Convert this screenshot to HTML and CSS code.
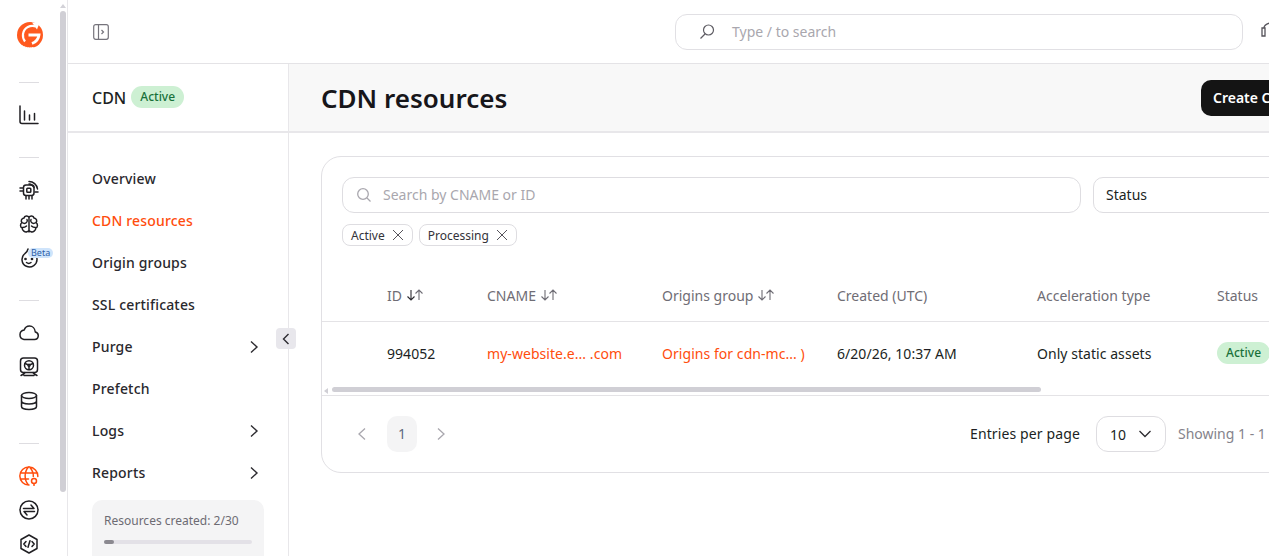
FILE: index.html
```html
<!DOCTYPE html>
<html lang="en">
<head>
    <meta charset="UTF-8">
    <meta name="viewport" content="width=device-width, initial-scale=1.0">
    <title>CDN resources</title>
    <link rel="stylesheet" href="styles.css">
</head>
<body>
    <div class="app">
        <aside class="rail">
            <div class="rail-scroll"><span class="rail-arrow"></span><span class="rail-thumb"></span></div>
            <div class="logo">
                <svg width="28" height="28" viewBox="0 0 28 28">
                    <circle cx="14" cy="14" r="13" fill="#ff5a1f"/>
                    <path d="M20 5.500C14.500 3.500 8 6.500 7 13c-.4 3 .5 5.500 2 7.500" fill="none" stroke="#fff" stroke-width="2.200"/>
                    <path d="M16 1.500 23.500 2 21 8.500Z" fill="#fff"/>
                    <path d="M12.500 14H23c-.5 4-3 7-7 8.500" fill="none" stroke="#fff" stroke-width="2.800"/>
                    <path d="M2.500 21.500c4 5 10 6 15 5" fill="none" stroke="#fff" stroke-width="1"/>
                </svg>
            </div>
            <div class="rail-line"></div>
            <div class="rail-icon">
                <svg class="ico" viewBox="0 0 20 20"><path d="M1 1v15.500a2 2 0 0 0 2 2h16M5.500 6v9M10.500 10v5M15.500 8.500V15"/></svg>
            </div>
            <div class="rail-line wide"></div>
            <div class="rail-icon">
                <svg class="ico" viewBox="0 0 20 20"><rect x="4.500" y="5" width="10.500" height="10.500" rx="2.500"/><rect x="7.800" y="8.300" width="4" height="4" rx=".8"/><path d="M1 8h3M1 11h3M16 12h3M7 16v3M10 16v3M13 16v3M10 1.500a8.500 8.500 0 0 1 8.500 7.500M10 4a6 6 0 0 1 5 3.500"/></svg>
            </div>
            <div class="rail-icon">
                <svg class="ico" viewBox="0 0 20 20"><path d="M10 3v15M10 3.500C9 1.500 5.500 1.500 5 4 2.500 4.200 1.500 7 3 8.500 1 10 1 13 3.200 14c0 2.800 2.800 4.500 4.800 3.800.8-.1 1.500-.8 2-1.300.5.500 1.200 1.200 2 1.300 2 .7 4.800-1 4.800-3.800C19 13 19 10 17 8.500 18.500 7 17.500 4.200 15 4c-.5-2.500-4-2.500-5-.500ZM3 8.500c1.500 1 3.500 1 4.500 0 1-.8 1-2 .5-3M17 8.500c-1.500 1-3.500 1-4.500 0-1-.8-1-2-.5-3M3.500 13.500c1.500 0 3-.5 4-1.500M16.500 13.500c-1.500 0-3-.5-4-1.500"/></svg>
            </div>
            <div class="rail-icon">
                <svg class="ico" viewBox="0 0 20 20"><path d="M6 5.500A7.500 7.500 0 1 0 18 11c0-1.500-.3-2.500-1-3.500M6 5.500C8 4.500 8.500 3 9 1"/><circle cx="6.500" cy="11" r=".6"/><circle cx="13" cy="11" r=".6"/><path d="M7.500 14.500c1.200 1 3.300 1 4.500 0"/></svg>
                <span class="beta">Beta</span>
            </div>
            <div class="rail-line wide"></div>
            <div class="rail-icon">
                <svg class="ico" viewBox="0 0 20 20"><path d="M5 16.500h10.500a3.800 3.800 0 0 0 .8-7.500C16 5.500 13.500 3 10.500 3 8 3 6 4.500 5.200 7A4.800 4.800 0 0 0 5 16.500Z"/></svg>
            </div>
            <div class="rail-icon">
                <svg class="ico" viewBox="0 0 20 20"><rect x="1.500" y="1" width="17" height="14.500" rx="3"/><circle cx="10" cy="8.200" r="4.500"/><circle cx="10" cy="8.200" r="1"/><path d="M10 9.200V12.500M9.100 7.700 6 6.500M10.900 7.700 14 6.500M2 18.500c2-1 3-1.500 4-3M18 18.500c-2-1-3-1.500-4-3M5 18.500h10"/></svg>
            </div>
            <div class="rail-icon">
                <svg class="ico" viewBox="0 0 20 20"><ellipse cx="10" cy="4.500" rx="7.500" ry="3"/><path d="M2.500 4.500v11c0 1.700 3.400 3 7.500 3s7.500-1.300 7.500-3v-11M2.500 10c0 1.700 3.400 3 7.500 3s7.500-1.300 7.500-3"/></svg>
            </div>
            <div class="rail-line wide"></div>
            <div class="rail-icon active">
                <svg class="ico" viewBox="0 0 20 20"><path d="M18.800 10.500A9 9 0 1 0 10 19M1.500 7h17M1.500 13h8M9.500 1C5 6 5 14 9.500 19M10.500 1c3 3.200 4 6.500 3.800 9.500"/><circle cx="15" cy="15" r="2.500"/><path d="M15 17.500v2"/></svg>
            </div>
            <div class="rail-icon">
                <svg class="ico" viewBox="0 0 20 20"><circle cx="10" cy="10" r="9"/><path d="M4.500 8.500h10.500l-3-3.500M15.500 11.500H5l3 3.500"/></svg>
            </div>
            <div class="rail-icon">
                <svg class="ico" viewBox="0 0 20 20"><path d="M10 1 18 5.500v9L10 19l-8-4.500v-9ZM7 7.500 4.800 10 7 12.500M13 7.500 15.200 10 13 12.500M11 6.800 9 13.200"/></svg>
            </div>
        </aside>

        <div class="main">
            <header class="topbar">
                <svg class="panel-toggle" width="16" height="16" viewBox="0 0 16 16"><rect x=".7" y=".7" width="14.600" height="14.600" rx="2"/><path d="M5.500 1v14M8.500 6l2 2-2 2"/></svg>
                <div class="top-search">
                    <svg width="18" height="18" viewBox="0 0 18 18"><circle cx="10.500" cy="7" r="5"/><path d="M7 11 2.500 15.500"/></svg>
                    <span>Type / to search</span>
                </div>
                <svg class="top-help" width="20" height="20" viewBox="0 0 20 20"><path d="M4 6c0-2 2-4 6-5M2 6h3v8H2ZM10 17h1"/></svg>
            </header>

            <div class="subhead">
                <div class="subhead-left">
                    <span class="product">CDN</span>
                    <span class="badge">Active</span>
                </div>
                <div class="subhead-right">
                    <h1>CDN resources</h1>
                    <button class="btn-create">Create CDN resource</button>
                </div>
            </div>

            <div class="body-row">
                <nav class="sidebar">
                    <a class="nav-item">Overview</a>
                    <a class="nav-item selected">CDN resources</a>
                    <a class="nav-item">Origin groups</a>
                    <a class="nav-item">SSL certificates</a>
                    <a class="nav-item">Purge <svg class="chev" viewBox="0 0 10 14"><path d="M2 1.500 8 7l-6 5.500"/></svg></a>
                    <a class="nav-item">Prefetch</a>
                    <a class="nav-item">Logs <svg class="chev" viewBox="0 0 10 14"><path d="M2 1.500 8 7l-6 5.500"/></svg></a>
                    <a class="nav-item">Reports <svg class="chev" viewBox="0 0 10 14"><path d="M2 1.500 8 7l-6 5.500"/></svg></a>
                    <div class="quota">
                        <div class="quota-label">Resources created: 2/30</div>
                        <div class="quota-track"><div class="quota-fill" style="width: 6.700%"></div></div>
                    </div>
                    <button class="collapse"><svg width="8" height="12" viewBox="0 0 8 12"><path d="M6.500 1 1.500 6l5 5"/></svg></button>
                </nav>

                <section class="content">
                    <div class="card">
                        <div class="filters">
                            <div class="search-box">
                                <svg width="16" height="16" viewBox="0 0 16 16"><circle cx="7" cy="7" r="5.300"/><path d="m11 11 3.500 3.500"/></svg>
                                <span>Search by CNAME or ID</span>
                            </div>
                            <div class="status-select">Status</div>
                        </div>
                        <div class="chips">
                            <span class="chip">Active <svg viewBox="0 0 12 12"><path d="m1 1 10 10M11 1 1 11"/></svg></span>
                            <span class="chip">Processing <svg viewBox="0 0 12 12"><path d="m1 1 10 10M11 1 1 11"/></svg></span>
                        </div>

                        <div class="table-row table-head">
                            <div>ID <svg class="sort" viewBox="0 0 18 12"><path class="down" d="M5 1v10M1.500 7.500 5 11l3.500-3.500"/><path d="M13 11V1M9.500 4.500 13 1l3.500 3.500"/></svg></div>
                            <div>CNAME <svg class="sort" viewBox="0 0 18 12"><path d="M5 1v10M1.500 7.500 5 11l3.500-3.500M13 11V1M9.500 4.500 13 1l3.500 3.500"/></svg></div>
                            <div>Origins group <svg class="sort" viewBox="0 0 18 12"><path d="M5 1v10M1.500 7.500 5 11l3.500-3.500M13 11V1M9.500 4.500 13 1l3.500 3.500"/></svg></div>
                            <div>Created (UTC)</div>
                            <div>Acceleration type</div>
                            <div>Status</div>
                        </div>
                        <div class="table-row table-data">
                            <div>994052</div>
                            <div class="link">my-website.e... .com</div>
                            <div class="link">Origins for cdn-mc... )</div>
                            <div>6/20/26, 10:37 AM</div>
                            <div>Only static assets</div>
                            <div><span class="badge small">Active</span></div>
                        </div>
                        <div class="hscroll"><span class="hscroll-arrow"></span><span class="hscroll-thumb"></span></div>

                        <div class="pager">
                            <svg class="pg-arrow" viewBox="0 0 10 14"><path d="M8 1.500 2 7l6 5.500"/></svg>
                            <span class="pg-num">1</span>
                            <svg class="pg-arrow" viewBox="0 0 10 14"><path d="M2 1.500 8 7l-6 5.500"/></svg>
                            <span class="per-page">Entries per page</span>
                            <div class="per-select">10 <svg width="14" height="8" viewBox="0 0 14 8"><path d="m1.500 1 5.500 5.500L12.500 1"/></svg></div>
                            <span class="showing">Showing 1 - 1 of 1</span>
                        </div>
                    </div>
                </section>
            </div>
        </div>
    </div>
</body>
</html>
```

FILE: styles.css
```css
* {
    margin: 0;
    padding: 0;
    box-sizing: border-box;
}

html, body {
    width: 1269px;
    height: 556px;
    overflow: hidden;
}

body {
    font-family: "Noto Sans", "Open Sans", sans-serif;
    font-size: 14px;
    color: #201f23;
    background: #ffffff;
}

.app {
    display: flex;
    height: 556px;
}

/* left icon rail */
.rail {
    position: relative;
    flex: 0 0 68px;
    height: 556px;
    border-right: 1px solid #e8e7ea;
    display: flex;
    flex-direction: column;
    align-items: flex-start;
    padding-top: 21px;
    overflow: hidden;
}

.rail-scroll {
    position: absolute;
    top: 0;
    left: 60px;
    width: 7px;
    height: 100%;
}

.rail-arrow {
    position: absolute;
    top: 4px;
    left: 0;
    border-left: 3.500px solid transparent;
    border-right: 3.500px solid transparent;
    border-bottom: 4px solid #d3d2d8;
}

.rail-thumb {
    position: absolute;
    top: 11px;
    left: 0;
    width: 6px;
    height: 481px;
    border-radius: 3px;
    background: #d0cfd5;
}

.logo {
    flex: none;
    width: 60px;
    height: 28px;
    display: flex;
    justify-content: center;
    margin-bottom: 33px;
}

.rail-line {
    flex: none;
    width: 20px;
    height: 1px;
    margin: 0 0 15px 19px;
    background: #dedde1;
}

.rail-line.wide {
    margin-top: 25px;
}

.rail-icon {
    flex: none;
    position: relative;
    width: 58px;
    height: 34px;
    display: flex;
    align-items: center;
    justify-content: center;
}

.ico {
    width: 20px;
    height: 20px;
    fill: none;
    stroke: #201f23;
    stroke-width: 1.500;
    stroke-linecap: round;
    stroke-linejoin: round;
}

.rail-icon.active .ico {
    stroke: #ff4d0d;
}

.beta {
    position: absolute;
    top: 7px;
    left: 28px;
    padding: 0 3px;
    font-size: 9px;
    line-height: 10px;
    border-radius: 5px;
    color: #2c5ea8;
    background: #cfe4fb;
}

/* main column */
.main {
    flex: 1;
    min-width: 0;
}

.topbar {
    height: 64px;
    display: flex;
    align-items: center;
    padding: 0 0 0 25px;
    border-bottom: 1px solid #e4e3e6;
}

.panel-toggle {
    flex: 0 0 16px;
    fill: none;
    stroke: #75737b;
    stroke-width: 1.200;
}

.top-search {
    flex: 0 0 568px;
    height: 36px;
    margin-left: 566px;
    display: flex;
    align-items: center;
    gap: 16px;
    padding-left: 22px;
    border: 1px solid #e1e0e4;
    border-radius: 12px;
    color: #a9a7ae;
}

.top-search svg {
    fill: none;
    stroke: #5e5c63;
    stroke-width: 1.200;
}

.top-help {
    flex: 0 0 20px;
    margin-left: 17px;
    fill: none;
    stroke: #55535a;
    stroke-width: 1.300;
}

.subhead {
    display: flex;
    height: 69px;
    border-bottom: 2px solid #e8e7ea;
}

.subhead-left {
    flex: 0 0 221px;
    display: flex;
    align-items: center;
    gap: 5px;
    padding-left: 24px;
    border-right: 1px solid #e8e7ea;
}

.subhead-left .badge {
    margin-bottom: 2px;
}

.product {
    font-size: 16px;
    font-weight: 500;
    margin-top: 1px;
}

.badge {
    display: inline-block;
    height: 22px;
    padding: 0 9px;
    line-height: 21px;
    font-size: 12px;
    font-weight: 500;
    border-radius: 11px;
    color: #19703a;
    background: #cdf0d3;
}

.subhead-right {
    flex: 1;
    min-width: 0;
    display: flex;
    align-items: center;
    justify-content: space-between;
    padding-left: 32px;
    background: #f8f8f8;
    overflow: hidden;
}

h1 {
    font-size: 26px;
    font-weight: 600;
    color: #17161a;
}

.btn-create {
    flex: 0 0 140px;
    height: 36px;
    margin-right: -72px;
    padding-left: 12px;
    text-align: left;
    white-space: nowrap;
    overflow: hidden;
    font-family: inherit;
    font-size: 14px;
    font-weight: 600;
    color: #ffffff;
    background: #141414;
    border: none;
    border-radius: 10px;
}

.body-row {
    display: flex;
    height: 423px;
}

/* sidebar */
.sidebar {
    position: relative;
    flex: 0 0 221px;
    padding: 24px 24px 0;
    border-right: 1px solid #e8e7ea;
}

.nav-item {
    display: flex;
    align-items: center;
    justify-content: space-between;
    height: 42px;
    font-size: 14px;
    font-weight: 500;
    letter-spacing: .17px;
    padding-right: 5px;
    color: #29282d;
}

.nav-item.selected {
    color: #ff4d0d;
}

.chev {
    width: 10px;
    height: 14px;
    fill: none;
    stroke: #2c2b30;
    stroke-width: 1.400;
    margin-top: 1px;
}

.quota {
    height: 80px;
    margin-top: 7px;
    padding: 12px 12px;
    border-radius: 10px;
    background: #f4f4f5;
}

.quota-label {
    font-size: 12px;
    color: #6d6b73;
}

.quota-track {
    height: 4px;
    margin-top: 11px;
    border-radius: 2px;
    background: #e3e1e7;
}

.quota-fill {
    height: 4px;
    border-radius: 2px;
    background: #8b8990;
}

.collapse {
    position: absolute;
    top: 195px;
    left: 208px;
    width: 20px;
    height: 21px;
    display: flex;
    align-items: center;
    justify-content: center;
    border: none;
    border-radius: 4px;
    background: #e8e7ec;
}

.collapse svg {
    fill: none;
    stroke: #2c2b30;
    stroke-width: 1.400;
}

/* content card */
.content {
    flex: 1;
    min-width: 0;
    padding: 23px 0 0 32px;
    overflow: hidden;
}

.card {
    width: 1100px;
    height: 317px;
    padding: 20px 0 0;
    border: 1px solid #e1e0e4;
    border-radius: 20px;
}

.filters {
    display: flex;
    gap: 12px;
    padding: 0 20px;
}

.search-box {
    flex: 0 0 739px;
    height: 36px;
    display: flex;
    align-items: center;
    gap: 11px;
    padding-left: 13px;
    padding-bottom: 1px;
    border: 1px solid #dedde1;
    border-radius: 12px;
    color: #a9a7ae;
}

.search-box svg {
    fill: none;
    stroke: #a9a7ae;
    stroke-width: 1.300;
}

.status-select {
    flex: 1;
    height: 36px;
    line-height: 34px;
    padding-left: 12px;
    border: 1px solid #dedde1;
    border-radius: 10px;
}

.chips {
    display: flex;
    gap: 6px;
    padding: 11px 20px 0;
}

.chip {
    display: flex;
    align-items: center;
    gap: 7px;
    height: 22px;
    padding: 0 8px;
    font-size: 12px;
    border: 1px solid #dedde1;
    border-radius: 8px;
    color: #34333a;
}

.chip svg {
    width: 12px;
    height: 12px;
    fill: none;
    stroke: #56545b;
    stroke-width: 1;
}

/* table */
.table-row {
    display: grid;
    grid-template-columns: 100px 175px 175px 200px 180px 120px;
    align-items: center;
    padding-left: 65px;
}

.table-head {
    height: 76px;
    padding-top: 24px;
    color: #6f6d75;
    border-bottom: 1px solid #e4e3e6;
}

.sort {
    width: 18px;
    height: 12px;
    fill: none;
    stroke: #6f6d75;
    stroke-width: 1.100;
}

.sort .down {
    stroke: #2c2b30;
}

.table-data {
    height: 64px;
    padding-bottom: 2px;
    letter-spacing: .05px;
}

.link {
    color: #ff4d0d;
}

.badge.small {
    height: 22px;
    line-height: 22px;
    padding: 0 9px;
}

.hscroll {
    position: relative;
    height: 10px;
    border-bottom: 1px solid #e4e3e6;
}

.hscroll-arrow {
    position: absolute;
    top: 2px;
    left: 2px;
    border-top: 3px solid transparent;
    border-bottom: 3px solid transparent;
    border-right: 4px solid #d0cfd5;
}

.hscroll-thumb {
    position: absolute;
    top: 1px;
    left: 10px;
    width: 709px;
    height: 5px;
    border-radius: 3px;
    background: #d0cfd5;
}

.pager {
    display: flex;
    align-items: center;
    height: 76px;
    padding-left: 35px;
}

.pg-arrow {
    width: 10px;
    height: 14px;
    fill: none;
    stroke: #a9a7ae;
    stroke-width: 1.300;
}

.pg-num {
    width: 30px;
    height: 36px;
    line-height: 36px;
    margin: 0 19px 0 20px;
    text-align: center;
    color: #5f6a80;
    border-radius: 10px;
    background: #f4f4f5;
}

.per-page {
    margin-left: 524px;
    margin-bottom: 2px;
    letter-spacing: .12px;
}

.per-select {
    width: 70px;
    height: 36px;
    margin-left: 16px;
    display: flex;
    align-items: center;
    gap: 12px;
    padding-left: 13px;
    border: 1px solid #dedde1;
    border-radius: 12px;
}

.per-select svg {
    fill: none;
    stroke: #2c2b30;
    stroke-width: 1.300;
}

.showing {
    margin-left: 12px;
    margin-bottom: 2px;
    white-space: nowrap;
    color: #85838b;
}
```
